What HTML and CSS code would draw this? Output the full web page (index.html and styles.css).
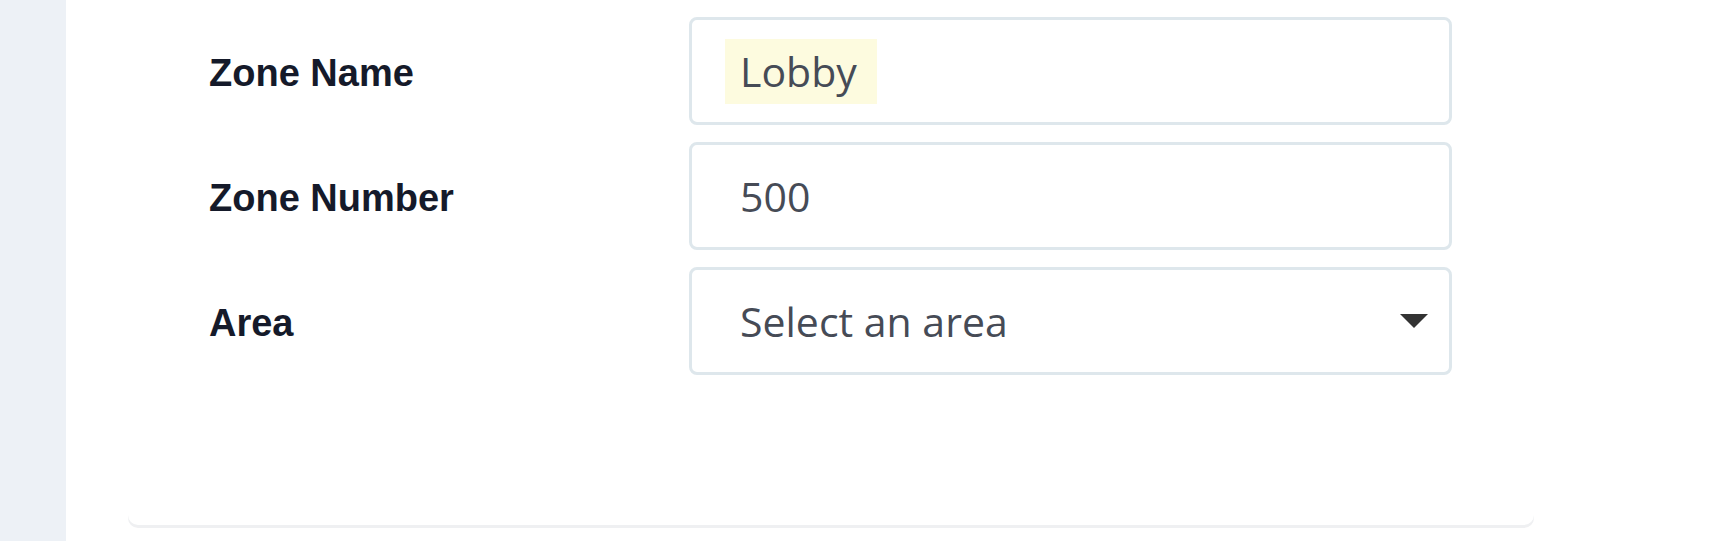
FILE: index.html
```html
<!DOCTYPE html>
<html lang="en">
<head>
  <meta charset="UTF-8" />
  <meta name="viewport" content="width=device-width, initial-scale=1.0" />
  <title>Edit Zone</title>
  <link rel="stylesheet" href="styles.css">
</head>
<body>
  <aside class="sidebar"></aside>
  <main class="main">
    <div class="card">
      <form class="zone-form">
        <label class="field-label" for="zoneName">Zone Name</label>
        <div class="field" id="zoneName">
          <span class="highlight">Lobby</span>
        </div>

        <label class="field-label" for="zoneNumber">Zone Number</label>
        <div class="field" id="zoneNumber">500</div>

        <label class="field-label" for="area">Area</label>
        <div class="field field-select" id="area">
          <span>Select an area</span>
          <svg class="caret" width="28" height="14" viewBox="0 0 28 14">
            <polygon points="0,0 28,0 14,14" fill="#333" />
          </svg>
        </div>
      </form>
    </div>
  </main>
</body>
</html>
```

FILE: styles.css
```css
body {
  margin: 0;
  display: flex;
  min-height: 541px;
  background: #fff;
  font-family: "Open Sans", "Noto Sans", sans-serif;
}
.sidebar {
  width: 66px;
  flex-shrink: 0;
  background: #edf1f6;
}
.main {
  flex: 1;
  background: #fff;
}
.card {
  margin-left: 62px;
  width: 1406px;
  box-sizing: border-box;
  padding: 17px 82px 150px 81px;
  background: #fff;
  border-radius: 0 0 10px 10px;
  box-shadow: 0 3px 0 #eff0f2;
}
.zone-form {
  display: grid;
  grid-template-columns: 480px 1fr;
  row-gap: 17px;
  align-items: center;
}
.field-label {
  padding-top: 4px;
  font-family: "Liberation Sans", Arial, sans-serif;
  font-weight: bold;
  font-size: 38px;
  color: #151a2a;
}
.field {
  height: 108px;
  box-sizing: border-box;
  border: 3px solid #dee7ec;
  border-radius: 8px;
  padding-left: 48px;
  padding-right: 21px;
  display: flex;
  align-items: center;
  font-size: 41px;
  color: #464b56;
}
.highlight {
  display: inline-block;
  margin-left: -15px;
  padding: 0 20px 0 15px;
  height: 65px;
  line-height: 65px;
  background: #fdfbdf;
}
.field-select {
  justify-content: space-between;
}
.caret {
  display: block;
}
```
